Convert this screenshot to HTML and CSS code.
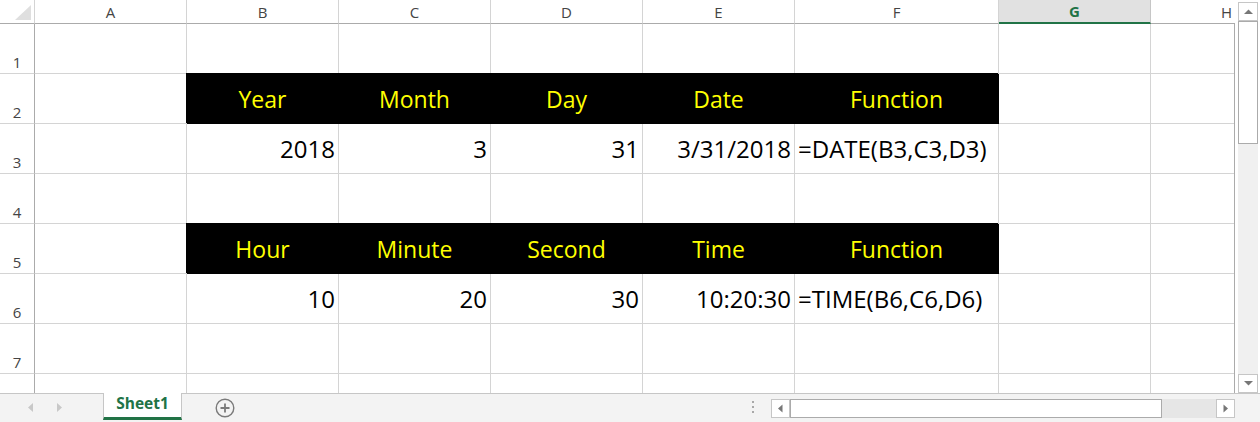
FILE: index.html
```html
<!DOCTYPE html>
<html>
<head>
<meta charset="utf-8">
<link rel="stylesheet" href="styles.css">
</head>
<body>
<div class="app">
  <div class="main">
    <div class="sheet">
      <div class="grid">
        <div class="corner"><svg width="35" height="24" viewBox="0 0 35 24"><polygon points="31,5 31,20 15,20" fill="#dfdfdf"/></svg></div>
        <div class="ch">A</div><div class="ch">B</div><div class="ch">C</div><div class="ch">D</div><div class="ch">E</div><div class="ch">F</div><div class="ch sel">G</div><div class="ch">H</div>

        <div class="rh">1</div><div class="c"></div><div class="c"></div><div class="c"></div><div class="c"></div><div class="c"></div><div class="c"></div><div class="c"></div><div class="c"></div>

        <div class="rh">2</div><div class="c"></div><div class="c hd">Year</div><div class="c hd">Month</div><div class="c hd">Day</div><div class="c hd">Date</div><div class="c hd">Function</div><div class="c"></div><div class="c"></div>

        <div class="rh">3</div><div class="c"></div><div class="c num">2018</div><div class="c num">3</div><div class="c num">31</div><div class="c num">3/31/2018</div><div class="c txt">=DATE(B3,C3,D3)</div><div class="c"></div><div class="c"></div>

        <div class="rh">4</div><div class="c"></div><div class="c"></div><div class="c"></div><div class="c"></div><div class="c"></div><div class="c"></div><div class="c"></div><div class="c"></div>

        <div class="rh">5</div><div class="c"></div><div class="c hd">Hour</div><div class="c hd">Minute</div><div class="c hd">Second</div><div class="c hd">Time</div><div class="c hd">Function</div><div class="c"></div><div class="c"></div>

        <div class="rh">6</div><div class="c"></div><div class="c num">10</div><div class="c num">20</div><div class="c num">30</div><div class="c num">10:20:30</div><div class="c txt">=TIME(B6,C6,D6)</div><div class="c"></div><div class="c"></div>

        <div class="rh">7</div><div class="c"></div><div class="c"></div><div class="c"></div><div class="c"></div><div class="c"></div><div class="c"></div><div class="c"></div><div class="c"></div>

        <div class="rh last"></div><div class="c last"></div><div class="c last"></div><div class="c last"></div><div class="c last"></div><div class="c last"></div><div class="c last"></div><div class="c last"></div><div class="c last"></div>
      </div>
    </div>
    <div class="edge"></div>
    <div class="vgap"></div>
    <div class="vcol">
      <div class="vbtn"><svg width="20" height="17" viewBox="0 0 20 17"><polygon points="5,11 14,11 9.5,6.5" fill="#777"/></svg></div>
      <div class="vthumb"></div>
      <div class="vtrack"></div>
      <div class="vbtn"><svg width="20" height="17" viewBox="0 0 20 17"><polygon points="5,6 14,6 9.5,10.5" fill="#777"/></svg></div>
    </div>
  </div>
  <div class="tabbar">
    <div class="nav"><svg width="103" height="28" viewBox="0 0 103 28"><polygon points="33,9 33,18 28,13.5" fill="#c8c8c8"/><polygon points="57,9 57,18 62,13.5" fill="#c8c8c8"/></svg></div>
    <div class="tab">Sheet1</div>
    <div class="plus"><svg width="20" height="20" viewBox="0 0 20 20"><circle cx="10" cy="10" r="8.8" fill="none" stroke="#7a7a7a" stroke-width="1.4"/><path d="M10 5.5V14.5M5.5 10H14.5" stroke="#7a7a7a" stroke-width="1.8"/></svg></div>
    <div class="spacer"></div>
    <div class="dots"><svg width="3" height="13" viewBox="0 0 3 13"><rect x="0" y="0" width="2" height="2" fill="#a8a8a8"/><rect x="0" y="5" width="2" height="2" fill="#a8a8a8"/><rect x="0" y="10" width="2" height="2" fill="#a8a8a8"/></svg></div>
    <div class="hscroll">
      <div class="hbtn"><svg width="17" height="17" viewBox="0 0 17 17"><polygon points="10.5,4.5 10.5,12.5 6,8.5" fill="#777"/></svg></div>
      <div class="hthumb"></div>
      <div class="htrack"></div>
      <div class="hbtn"><svg width="17" height="17" viewBox="0 0 17 17"><polygon points="6.5,4.5 6.5,12.5 11,8.5" fill="#777"/></svg></div>
    </div>
    <div class="tail"></div>
  </div>
</div>
</body>
</html>
```

FILE: styles.css
```css
* { box-sizing: border-box; }
html, body { margin: 0; padding: 0; background: #fff; }
body { width: 1260px; height: 422px; overflow: hidden; font-family: "Open Sans", "Liberation Sans", sans-serif; }

.app { display: flex; flex-direction: column; width: 1260px; height: 422px; }

.main { display: flex; height: 393px; background: #fff; }

.sheet { width: 1234px; height: 393px; overflow: hidden; flex: none; }

.grid {
  display: grid;
  grid-template-columns: 35px repeat(5, 152px) 204px 152px 152px;
  grid-template-rows: 24px repeat(7, 50px) 19px;
  width: 1303px;
}

.corner {
  border-right: 1px solid #d4d4d4;
  border-bottom: 1px solid #ababab;
  background: #fff;
}
.corner svg { display: block; }

.ch {
  display: flex;
  align-items: center;
  justify-content: center;
  font-size: 15px;
  color: #444;
  border-right: 1px solid #d4d4d4;
  border-bottom: 1px solid #ababab;
  background: #fff;
}
.ch.sel {
  background: #e1e1e1;
  color: #217346;
  font-weight: bold;
  border-bottom: 2px solid #217346;
  border-right-color: #c6c6c6;
}

.rh {
  display: flex;
  align-items: flex-end;
  justify-content: center;
  font-size: 15px;
  color: #444;
  padding-bottom: 1px;
  border-right: 1px solid #ababab;
  border-bottom: 1px solid #d4d4d4;
}

.c {
  display: flex;
  align-items: flex-end;
  font-size: 24px;
  color: #000;
  white-space: nowrap;
  padding-bottom: 8px;
  border-right: 1px solid #d4d4d4;
  border-bottom: 1px solid #d4d4d4;
}
.rh.last, .c.last { border-bottom: none; }

.c.num { justify-content: flex-end; padding-right: 3px; }
.c.txt { justify-content: flex-start; padding-left: 3px; }
.c.hd {
  justify-content: center;
  font-size: 23px;
  background: #000;
  color: #ffff00;
  border-right-color: #000;
  border-bottom-color: #000;
  box-shadow: -1px -1px 0 #000;
}

.edge { width: 1px; margin-top: 23px; background: #ababab; flex: none; }
.vgap { width: 3px; flex: none; }
.vcol {
  width: 20px;
  flex: none;
  display: flex;
  flex-direction: column;
  padding-top: 2px;
  background: #fff;
}
.vbtn {
  height: 19px;
  flex: none;
  background: #fff;
  border: 1px solid #c6c6c6;
}
.vbtn svg { display: block; }
.vthumb {
  height: 123px;
  flex: none;
  background: #fff;
  border: 1px solid #ababab;
}
.vtrack { flex: 1; background: #f0f0f0; }

.tabbar {
  display: flex;
  height: 29px;
  border-top: 1px solid #c6c6c6;
  background: #f3f3f3;
}
.nav { width: 103px; flex: none; }
.nav svg { display: block; }
.tab {
  width: 79px;
  flex: none;
  height: 27px;
  margin-top: -1px;
  background: #fff;
  border-left: 1px solid #c6c6c6;
  border-right: 1px solid #c6c6c6;
  border-bottom: 3px solid #217346;
  color: #217346;
  font-weight: bold;
  font-size: 15.5px;
  line-height: 21px;
  text-align: center;
}
.plus { width: 20px; height: 20px; margin-left: 33px; align-self: center; flex: none; }
.plus svg { display: block; }
.spacer { flex: 1; }
.dots { width: 3px; margin-right: 16px; margin-top: 7px; flex: none; }
.dots svg { display: block; }
.hscroll {
  width: 464px;
  height: 19px;
  margin-top: 5px;
  display: flex;
  flex: none;
}
.hbtn { width: 19px; flex: none; background: #fff; border: 1px solid #c6c6c6; }
.hbtn svg { display: block; }
.hthumb { width: 372px; flex: none; background: #fff; border: 1px solid #ababab; }
.htrack { flex: 1; background: #e6e6e6; }
.tail { width: 25px; flex: none; }
```
